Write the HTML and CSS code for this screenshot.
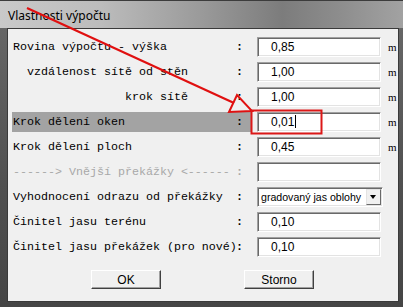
FILE: index.html
```html
<!DOCTYPE html>
<html lang="cs">

<head>
  <meta charset="UTF-8">
  <meta name="viewport" content="width=device-width, initial-scale=1.0">
  <link rel="stylesheet" href="styles.css">
  <title>Vlastnosti výpočtu</title>
</head>

<body>
  <div class="window">
    <div class="titlebar">Vlastnosti výpočtu</div>

    <main class="client">
      <div class="row">
        <span class="label">Rovina výpočtu - výška</span><span class="colon">:</span>
        <span class="field">0,85</span><span class="unit">m</span>
      </div>
      <div class="row">
        <span class="label indent-1">vzdálenost sítě od stěn</span><span class="colon">:</span>
        <span class="field">1,00</span><span class="unit">m</span>
      </div>
      <div class="row">
        <span class="label indent-2">krok sítě</span><span class="colon">:</span>
        <span class="field">1,00</span><span class="unit">m</span>
      </div>
      <div class="row selected">
        <span class="label">Krok dělení oken</span><span class="colon">:</span>
        <span class="field">0,01<span class="caret"></span></span><span class="unit">m</span>
      </div>
      <div class="row">
        <span class="label">Krok dělení ploch</span><span class="colon">:</span>
        <span class="field">0,45</span><span class="unit">m</span>
      </div>
      <div class="row disabled">
        <span class="label">------&gt; Vnější překážky &lt;------</span><span class="colon">:</span>
        <span class="field"></span><span class="unit"></span>
      </div>
      <div class="row">
        <span class="label">Vyhodnocení odrazu od překážky</span><span class="colon">:</span>
        <span class="field select">gradovaný jas oblohy<span class="drop"></span></span><span class="unit"></span>
      </div>
      <div class="row">
        <span class="label">Činitel jasu terénu</span><span class="colon">:</span>
        <span class="field">0,10</span><span class="unit"></span>
      </div>
      <div class="row">
        <span class="label">Činitel jasu překážek (pro nové)</span><span class="colon">:</span>
        <span class="field">0,10</span><span class="unit"></span>
      </div>

      <div class="buttons">
        <button>OK</button>
        <button>Storno</button>
      </div>
    </main>

    <!-- annotation drawn over the dialog -->
    <svg class="markup" width="403" height="307" viewBox="0 0 403 307">
      <line x1="27" y1="8" x2="234" y2="103" stroke="#e01010" stroke-width="2.2" />
      <polygon points="252,111 229,112 237,95" fill="none" stroke="#e01010" stroke-width="2" />
      <rect x="251.5" y="110.5" width="70" height="23" fill="none" stroke="#dc1818" stroke-width="2" />
    </svg>
  </div>
</body>

</html>
```

FILE: styles.css
```css
body {
  margin: 0;
  background: #4a4a4a;
}

.window {
  position: relative;
  width: 403px;
  height: 307px;
  overflow: hidden;
  background: linear-gradient(to bottom, #6a6a6a, #505050 60%, #454545);
}

.titlebar {
  box-sizing: border-box;
  height: 28px;
  padding: 7px 0 0 8px;
  font-family: "Noto Sans", "Open Sans", sans-serif;
  font-size: 12px;
  line-height: 16px;
  color: #000;
  border-top: 1px solid #3c3c3c;
  background: linear-gradient(to right, #c9c9c9 0%, #bcbcbc 25%, #9a9a9a 50%, #7c7c7c 70%, #8e8e8e 85%, #a2a2a2 100%);
}

.client {
  box-sizing: border-box;
  height: 274px;
  margin: 0 4px 0 7px;
  padding: 5px 0 0 4px;
  border: 1px solid #3a3a3a;
  background: #f0f0f0;
  font-family: "Liberation Mono", "DejaVu Sans Mono", monospace;
  font-size: 11.67px;
  color: #000;
}

.row {
  display: flex;
  align-items: center;
  height: 25px;
}

.row > span {
  flex-shrink: 0;
}

.label {
  box-sizing: border-box;
  width: 224px;
  height: 20px;
  padding-left: 1px;
  line-height: 20px;
  white-space: pre;
}

.indent-1 {
  padding-left: 15px;
}

.indent-2 {
  padding-left: 113px;
}

.colon {
  width: 16px;
  height: 20px;
  line-height: 20px;
  font-weight: bold;
}

.selected .label,
.selected .colon {
  background: #a3a3a3;
}

.disabled .label,
.disabled .colon {
  color: #a8a8a8;
}

.field {
  box-sizing: border-box;
  position: relative;
  width: 124px;
  height: 20px;
  margin-left: 5px;
  padding-left: 13px;
  border-top: 1px solid #a0a0a0;
  border-left: 1px solid #a0a0a0;
  border-right: 1px solid #fff;
  border-bottom: 1px solid #fff;
  box-shadow: inset 1px 1px #696969, inset -1px -1px #e3e3e3;
  background: #fff;
  font-family: "Liberation Sans", Arial, sans-serif;
  font-size: 12px;
  line-height: 18px;
}

.caret {
  display: inline-block;
  width: 1px;
  height: 13px;
  margin-left: 1px;
  vertical-align: -2px;
  background: #000;
}

.select {
  width: 126px;
  padding-left: 3px;
  font-size: 10.6px;
  white-space: nowrap;
}

.drop {
  position: absolute;
  top: 1px;
  right: 1px;
  width: 15px;
  height: 16px;
  box-sizing: border-box;
  background: #f0f0f0;
  border-top: 1px solid #e3e3e3;
  border-left: 1px solid #e3e3e3;
  border-right: 1px solid #696969;
  border-bottom: 1px solid #696969;
}

.drop::after {
  content: "";
  position: absolute;
  left: 3px;
  top: 5px;
  border-left: 3.5px solid transparent;
  border-right: 3.5px solid transparent;
  border-top: 4px solid #000;
}

.unit {
  width: 10px;
  margin-left: 7px;
  font-family: "Liberation Serif", serif;
  font-size: 11px;
}

.buttons {
  display: flex;
  gap: 83px;
  margin-top: 11px;
  padding-left: 79px;
}

button {
  box-sizing: border-box;
  width: 70px;
  height: 19px;
  padding: 0;
  border-top: 1px solid #fff;
  border-left: 1px solid #fff;
  border-right: 1px solid #404040;
  border-bottom: 1px solid #404040;
  box-shadow: inset -1px -1px #a0a0a0;
  background: #f0f0f0;
  font-family: "Liberation Sans", Arial, sans-serif;
  font-size: 12px;
  color: #000;
}

.markup {
  position: absolute;
  left: 0;
  top: 0;
  pointer-events: none;
}
```
